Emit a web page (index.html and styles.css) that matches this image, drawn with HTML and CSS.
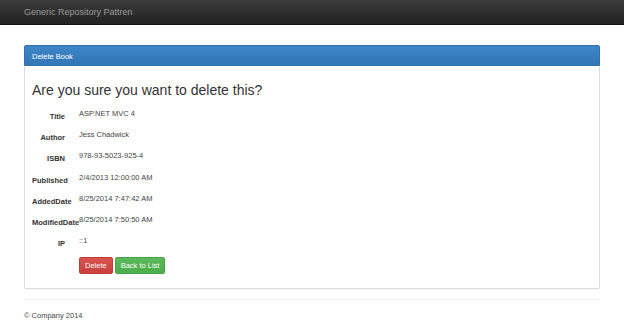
FILE: index.html
```html
<!DOCTYPE html>
<html lang="en">
<head>
    <meta charset="UTF-8">
    <title>Delete Book - Generic Repository Pattren</title>
    <link rel="stylesheet" href="styles.css">
</head>
<body>
    <div class="navbar">
        <span class="brand">Generic Repository Pattren</span>
    </div>

    <div class="container">
        <div class="panel">
            <div class="panel-heading">Delete Book</div>
            <div class="panel-body">
                <h3>Are you sure you want to delete this?</h3>
                <dl class="details">
                    <div class="row"><dt>Title</dt><dd>ASP.NET MVC 4</dd></div>
                    <div class="row"><dt>Author</dt><dd>Jess Chadwick</dd></div>
                    <div class="row"><dt>ISBN</dt><dd>978-93-5023-925-4</dd></div>
                    <div class="row"><dt>Published</dt><dd>2/4/2013 12:00:00 AM</dd></div>
                    <div class="row"><dt>AddedDate</dt><dd>8/25/2014 7:47:42 AM</dd></div>
                    <div class="row"><dt>ModifiedDate</dt><dd>8/25/2014 7:50:50 AM</dd></div>
                    <div class="row"><dt>IP</dt><dd>::1</dd></div>
                </dl>
                <div class="actions">
                    <button class="btn btn-danger">Delete</button>
                    <button class="btn btn-success">Back to List</button>
                </div>
            </div>
        </div>

        <hr>
        <footer>
            <p>&copy; Company 2014</p>
        </footer>
    </div>
</body>
</html>
```

FILE: styles.css
```css
body {
    margin: 0;
    font-family: "Liberation Sans", Arial, sans-serif;
    font-size: 7.5px;
    color: #333;
    background: #fff;
}
.navbar {
    height: 25px;
    background: linear-gradient(to bottom, #3c3c3c 0%, #222 100%);
    border-bottom: 1px solid #111;
    box-sizing: border-box;
}
.brand {
    display: block;
    padding-left: 24px;
    line-height: 24px;
    font-size: 9px;
    color: #9a9a9a;
}
.container {
    margin: 0 24px;
    padding-top: 20px;
}
.panel {
    border: 1px solid #ddd;
    border-radius: 2px;
    box-shadow: 0 1px 1px rgba(0,0,0,0.05);
}
.panel-heading {
    height: 21px;
    line-height: 21px;
    padding-left: 7px;
    margin: -1px -1px 0 -1px;
    background: linear-gradient(to bottom, #3d86c8 0%, #3276b6 100%);
    border: 1px solid #3271ad;
    border-radius: 2px 2px 0 0;
    color: #fff;
    box-sizing: border-box;
}
.panel-body {
    padding: 0 7px 14px 7px;
}
.panel-body h3 {
    margin: 16px 0 0 0;
    font-size: 14px;
    font-weight: normal;
    line-height: 16px;
    color: #333;
}
.details {
    margin: 11px 0 0 0;
}
.row {
    display: flex;
    height: 21.2px;
}
.row dt {
    width: 33px;
    flex: none;
    text-align: right;
    font-weight: bold;
    white-space: nowrap;
    padding-top: 3px;
    line-height: 10px;
}
.row dd {
    margin: 0 0 0 14px;
    line-height: 10px;
    color: #444;
}
.actions {
    display: flex;
    gap: 2px;
    margin-left: 47px;
}
.btn {
    height: 17px;
    padding: 0 5px;
    border: 1px solid transparent;
    border-radius: 2px;
    font-family: inherit;
    font-size: 7.5px;
    color: #fff;
    cursor: pointer;
}
.btn-danger {
    background: linear-gradient(to bottom, #d9534f 0%, #c9403c 100%);
    border-color: #c23a36;
}
.btn-success {
    background: linear-gradient(to bottom, #5cb85c 0%, #4cae4c 100%);
    border-color: #46a046;
}
hr {
    margin: 10px 0 0 0;
    border: 0;
    border-top: 1px solid #eee;
}
footer p {
    margin: 11px 0 0 0;
    line-height: 10px;
    color: #444;
}
```
